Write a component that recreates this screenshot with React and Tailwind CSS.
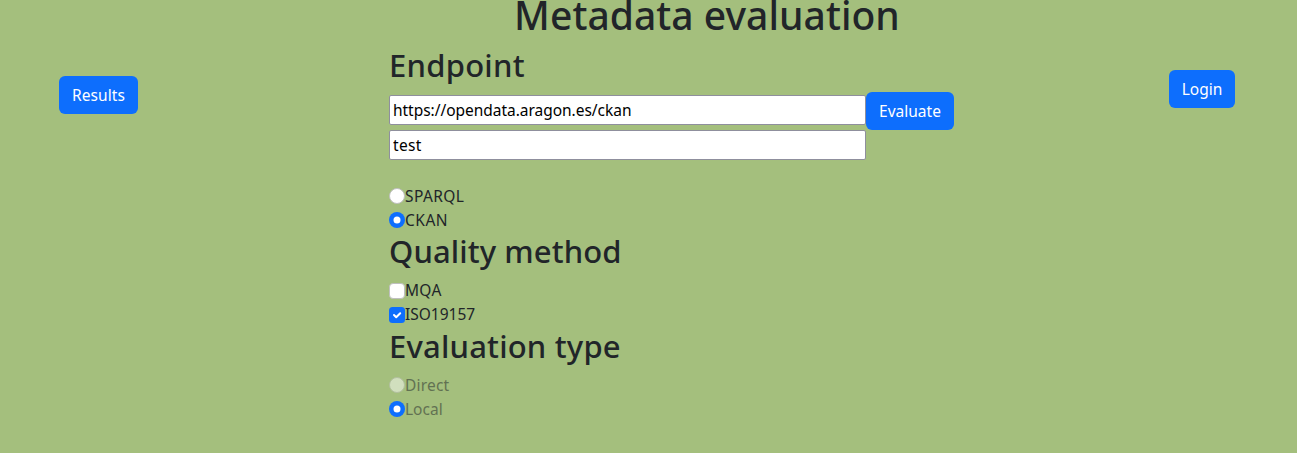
import React from 'react';

function Button({ className, children }) {
  return (
    <button
      className={`flex h-[38px] shrink-0 items-center justify-center whitespace-nowrap rounded-md bg-[#0d6efd] text-[15.5px] leading-6 text-white ${className}`}
    >
      {children}
    </button>
  );
}

function Heading({ className = '', children }) {
  return (
    <h2 className={`mb-2 h-[38.4px] whitespace-nowrap text-[31px] font-medium leading-[38.4px] ${className}`}>
      {children}
    </h2>
  );
}

function Radio({ checked, muted }) {
  return (
    <svg viewBox="0 0 16 16" className={`mt-1 size-4 shrink-0 ${muted ? 'opacity-50' : ''}`}>
      {checked ? (
        <>
          <circle cx="8" cy="8" r="8" fill="#0d6efd" />
          <circle cx="8" cy="8" r="3.5" fill="#fff" />
        </>
      ) : (
        <circle cx="8" cy="8" r="7.5" fill="#fff" stroke="#bfbfbf" />
      )}
    </svg>
  );
}

function Checkbox({ checked }) {
  return (
    <svg viewBox="0 0 16 16" className="mt-1 size-4 shrink-0">
      {checked ? (
        <>
          <rect width="16" height="16" rx="3.5" fill="#0d6efd" />
          <path d="M5 8 L7.2 10.2 L11.2 6.3" fill="none" stroke="#fff" strokeWidth="2" strokeLinecap="round" strokeLinejoin="round" />
        </>
      ) : (
        <rect x="0.5" y="0.5" width="15" height="15" rx="3.5" fill="#fff" stroke="#bfbfbf" />
      )}
    </svg>
  );
}

function Option({ control, className = '', children }) {
  return (
    <label className="flex h-6 items-start">
      {control}
      <span className={`whitespace-nowrap text-[15.5px] ${className}`}>{children}</span>
    </label>
  );
}

const inputClass =
  'block h-[30px] w-[477px] rounded-[2px] border border-[#8f8f9d] bg-white px-[3px] text-[15.5px] text-black outline-none';

export default function App() {
  return (
    <div className="flex h-[453px] w-[1297px] overflow-hidden bg-[#a4bf7d] font-['Noto_Sans','Open_Sans',sans-serif] text-[#212529]">
      <div className="w-[389px] shrink-0 pl-[59px] pt-[76px]">
        <Button className="w-[79px] tracking-[0.1px]">Results</Button>
      </div>
      <main className="-mt-[10px] w-[636px] shrink-0">
        <h1 className="mb-2 h-12 whitespace-nowrap text-center text-[39px] font-medium leading-[50px] tracking-[0.05px]">
          Metadata evaluation
        </h1>
        <Heading className="tracking-[0.25px]">Endpoint</Heading>
        <div className="flex items-start">
          <input className={`${inputClass} mt-[3px] tracking-[-0.03px]`} defaultValue="https://opendata.aragon.es/ckan" />
          <Button className="w-[88px]">Evaluate</Button>
        </div>
        <input className={`${inputClass} mb-6 tracking-[0.3px]`} defaultValue="test" />
        <Option control={<Radio />} className="leading-6 tracking-[0.4px]">SPARQL</Option>
        <Option control={<Radio checked />} className="leading-6 tracking-[0.5px]">CKAN</Option>
        <Heading className="tracking-[0.1px]">Quality method</Heading>
        <Option control={<Checkbox />} className="leading-[22px] tracking-[0.3px]">MQA</Option>
        <Option control={<Checkbox checked />} className="leading-[22px]">ISO19157</Option>
        <Heading className="tracking-[0.2px]">Evaluation type</Heading>
        <Option control={<Radio muted />} className="leading-6 tracking-[0.2px] opacity-50">Direct</Option>
        <Option control={<Radio checked />} className="leading-6 opacity-50">Local</Option>
      </main>
      <div className="pl-[144px] pt-[70px]">
        <Button className="w-[66px]">Login</Button>
      </div>
    </div>
  );
}
